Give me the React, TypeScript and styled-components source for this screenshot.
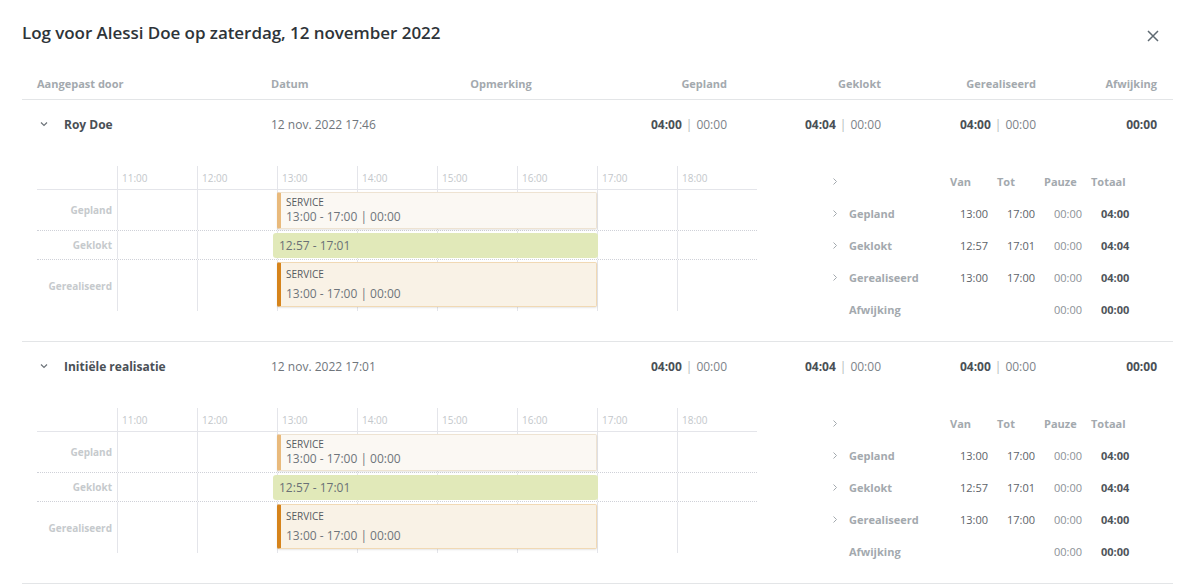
import React from "react";
import styled, { createGlobalStyle } from "styled-components";

const GlobalStyle = createGlobalStyle`
  html, body { margin: 0; padding: 0; background: #ffffff; }
  body { font-family: "Open Sans", "Noto Sans", Arial, sans-serif; color: #4a5056; }
  * { box-sizing: border-box; }
`;

const HOUR_W = 80;
const START_HOUR = 11;
const HOURS = [11, 12, 13, 14, 15, 16, 17, 18];

const toX = (t: string) => {
  const [h, m] = t.split(":").map(Number);
  return (h - START_HOUR + m / 60) * HOUR_W;
};

const Page = styled.div`
  padding: 21px 9px 0 22px;
  width: 1182px;
`;

const TitleBar = styled.div`
  display: flex;
  align-items: center;
  justify-content: space-between;
  height: 24px;
`;

const Title = styled.h1`
  margin: 0;
  font-size: 17px;
  line-height: 24px;
  font-weight: 600;
  letter-spacing: -0.05px;
  color: #2e3439;
`;

const CloseButton = styled.button`
  border: 0;
  background: none;
  padding: 0;
  margin: 6px 14px 0 0;
  width: 12px;
  height: 12px;
  display: flex;
  cursor: pointer;
`;

const Columns = styled.div`
  display: grid;
  grid-template-columns: 234px 149px 162px 145px 154px 155px 121px;
  align-items: center;
  padding: 0 16px 0 15px;
`;

const HeaderRow = styled(Columns)`
  margin-top: 22px;
  height: 33px;
  border-bottom: 1px solid #e3e5e7;
`;

const HeadCell = styled.div<{ $align?: "left" | "center" | "right" }>`
  font-size: 11px;
  font-weight: 700;
  color: #a3a9ae;
  text-align: ${(p) => p.$align || "left"};
`;

const Section = styled.div`
  border-bottom: 1px solid #e3e5e7;
`;

const SummaryRow = styled(Columns)`
  height: 48px;
`;

const NameCell = styled.div`
  display: flex;
  align-items: center;
  gap: 15px;
  padding-left: 2px;
  font-size: 12px;
  font-weight: 700;
  color: #4a5056;
`;

const DateCell = styled.div`
  font-size: 12px;
  color: #70767c;
`;

const ValueCell = styled.div`
  font-size: 12px;
  text-align: right;
  color: #7d8389;
  white-space: nowrap;
`;

const Strong = styled.span`
  font-weight: 700;
  color: #4a5056;
`;

const Pipe = styled.span`
  color: #b3b8bc;
  margin: 0 4px;
`;

const Body = styled.div`
  display: flex;
  align-items: flex-start;
  padding: 17px 0 16px 15px;
`;

const Timeline = styled.div`
  width: 720px;
  margin-top: 1px;
  display: flex;
  flex-direction: column;
`;

const TLRow = styled.div<{ $h: number; $line: "solid" | "dotted" | "none" }>`
  display: flex;
  height: ${(p) => p.$h}px;
  border-bottom: ${(p) =>
    p.$line === "solid"
      ? "1px solid #e4e5ea"
      : p.$line === "dotted"
      ? "1px dotted #cfd1d8"
      : "none"};
`;

const TLLabel = styled.div`
  width: 80px;
  flex: none;
  display: flex;
  align-items: center;
  justify-content: flex-end;
  padding-right: 5px;
  font-size: 10px;
  font-weight: 700;
  color: #c6cacd;
`;

const Track = styled.div`
  position: relative;
  width: 640px;
  flex: none;
  background: repeating-linear-gradient(
    to right,
    #e4e5ea 0,
    #e4e5ea 1px,
    transparent 1px,
    transparent ${HOUR_W}px
  );
`;

const HourTrack = styled.div`
  display: flex;
  width: 640px;
`;

const HourCell = styled.div`
  width: ${HOUR_W}px;
  border-left: 1px solid #e4e5ea;
  padding-left: 4px;
  display: flex;
  align-items: center;
  font-size: 10px;
  color: #c3c7cb;
`;

const Shift = styled.div<{ $variant: "planned" | "realised" }>`
  position: absolute;
  top: 2px;
  display: flex;
  flex-direction: column;
  gap: ${(p) => (p.$variant === "realised" ? "5px" : "0")};
  padding: ${(p) => (p.$variant === "realised" ? "5px" : "3px")} 0 0 5px;
  background: ${(p) => (p.$variant === "realised" ? "#f9f2e6" : "#fbf8f3")};
  border: 1px solid ${(p) => (p.$variant === "realised" ? "#f1d9b4" : "#eee3d2")};
  border-left: 4px solid ${(p) => (p.$variant === "realised" ? "#d6841c" : "#e9ba7c")};
  border-radius: 2px;
  box-shadow: 0 1px 2px rgba(0, 0, 0, 0.1);
`;

const ShiftType = styled.div`
  font-size: 10px;
  line-height: 12px;
  color: #555b61;
`;

const ShiftTime = styled.div`
  font-size: 12px;
  line-height: 17px;
  color: #6f757b;
  white-space: nowrap;
`;

const Clocked = styled.div`
  position: absolute;
  top: 2px;
  height: 25px;
  display: flex;
  align-items: center;
  padding-left: 6px;
  background: #e1e9b9;
  border-radius: 3px;
  font-size: 12px;
  color: #6a7076;
  white-space: nowrap;
`;

const Detail = styled.div`
  margin-left: 73px;
  display: grid;
  grid-template-columns: 19px 101px repeat(4, 47px);
  grid-auto-rows: 32px;
  align-items: center;
`;

const DHead = styled.div`
  font-size: 11px;
  font-weight: 700;
  color: #a3a9ae;
`;

const DLabel = styled.div`
  font-size: 11px;
  font-weight: 700;
  color: #a3a9ae;
`;

const DValue = styled.div<{ $tone: "dark" | "light" | "bold" }>`
  font-size: 11px;
  padding-left: 10px;
  font-weight: ${(p) => (p.$tone === "bold" ? 700 : 400)};
  color: ${(p) => (p.$tone === "light" ? "#8b9197" : p.$tone === "bold" ? "#4f555b" : "#5d6369")};
`;

const ChevronCell = styled.div`
  display: flex;
  align-items: center;
  padding-left: 2px;
`;

const Down = () => (
  <svg width="10" height="6" viewBox="0 0 10 6" fill="none">
    <path d="M2 1.5 L5 4.5 L8 1.5" stroke="#6d7379" strokeWidth="1.2" />
  </svg>
);

const Right = () => (
  <svg width="6" height="9" viewBox="0 0 6 9" fill="none">
    <path d="M1.5 1.5 L4.5 4.5 L1.5 7.5" stroke="#a3a9ae" strokeWidth="1" />
  </svg>
);

const CloseIcon = () => (
  <svg width="12" height="12" viewBox="0 0 12 12" fill="none">
    <path d="M1 1 L11 11 M11 1 L1 11" stroke="#5f6a72" strokeWidth="1.5" />
  </svg>
);

type Entry = {
  name: string;
  date: string;
  planned: string;
  clocked: string;
  realised: string;
  diff: string;
};

const entries: Entry[] = [
  { name: "Roy Doe", date: "12 nov. 2022 17:46", planned: "04:00", clocked: "04:04", realised: "04:00", diff: "00:00" },
  { name: "Initiële realisatie", date: "12 nov. 2022 17:01", planned: "04:00", clocked: "04:04", realised: "04:00", diff: "00:00" },
];

const detailRows = [
  { label: "Gepland", from: "13:00", to: "17:00", pause: "00:00", total: "04:00", chevron: true },
  { label: "Geklokt", from: "12:57", to: "17:01", pause: "00:00", total: "04:04", chevron: true },
  { label: "Gerealiseerd", from: "13:00", to: "17:00", pause: "00:00", total: "04:00", chevron: true },
  { label: "Afwijking", from: "", to: "", pause: "00:00", total: "00:00", chevron: false },
];

const span = (from: string, to: string) => ({
  left: Math.round(toX(from)),
  width: Math.round(toX(to) - toX(from)),
});

const LogSection: React.FC<{ e: Entry }> = ({ e }) => (
  <Section>
    <SummaryRow>
      <NameCell>
        <Down />
        {e.name}
      </NameCell>
      <DateCell>{e.date}</DateCell>
      <div />
      <ValueCell>
        <Strong>{e.planned}</Strong>
        <Pipe>|</Pipe>00:00
      </ValueCell>
      <ValueCell>
        <Strong>{e.clocked}</Strong>
        <Pipe>|</Pipe>00:00
      </ValueCell>
      <ValueCell>
        <Strong>{e.realised}</Strong>
        <Pipe>|</Pipe>00:00
      </ValueCell>
      <ValueCell>
        <Strong>{e.diff}</Strong>
      </ValueCell>
    </SummaryRow>
    <Body>
      <Timeline>
        <TLRow $h={24} $line="solid">
          <TLLabel />
          <HourTrack>
            {HOURS.map((h) => (
              <HourCell key={h}>{h}:00</HourCell>
            ))}
          </HourTrack>
        </TLRow>
        <TLRow $h={41} $line="dotted">
          <TLLabel>Gepland</TLLabel>
          <Track>
            <Shift $variant="planned" style={{ ...span("13:00", "17:00"), height: 37 }}>
              <ShiftType>SERVICE</ShiftType>
              <ShiftTime>13:00 - 17:00 | 00:00</ShiftTime>
            </Shift>
          </Track>
        </TLRow>
        <TLRow $h={29} $line="dotted">
          <TLLabel>Geklokt</TLLabel>
          <Track>
            <Clocked style={span("12:57", "17:01")}>12:57 - 17:01</Clocked>
          </Track>
        </TLRow>
        <TLRow $h={51} $line="none">
          <TLLabel>Gerealiseerd</TLLabel>
          <Track>
            <Shift $variant="realised" style={{ ...span("13:00", "17:00"), height: 45 }}>
              <ShiftType>SERVICE</ShiftType>
              <ShiftTime>13:00 - 17:00 | 00:00</ShiftTime>
            </Shift>
          </Track>
        </TLRow>
      </Timeline>
      <Detail>
        <ChevronCell>
          <Right />
        </ChevronCell>
        <div />
        <DHead>Van</DHead>
        <DHead>Tot</DHead>
        <DHead>Pauze</DHead>
        <DHead>Totaal</DHead>
        {detailRows.map((r) => (
          <React.Fragment key={r.label}>
            <ChevronCell>{r.chevron && <Right />}</ChevronCell>
            <DLabel>{r.label}</DLabel>
            <DValue $tone="dark">{r.from}</DValue>
            <DValue $tone="dark">{r.to}</DValue>
            <DValue $tone="light">{r.pause}</DValue>
            <DValue $tone="bold">{r.total}</DValue>
          </React.Fragment>
        ))}
      </Detail>
    </Body>
  </Section>
);

export default function App() {
  return (
    <>
      <GlobalStyle />
      <Page>
        <TitleBar>
          <Title>Log voor Alessi Doe op zaterdag, 12 november 2022</Title>
          <CloseButton aria-label="Sluiten">
            <CloseIcon />
          </CloseButton>
        </TitleBar>
        <HeaderRow>
          <HeadCell>Aangepast door</HeadCell>
          <HeadCell>Datum</HeadCell>
          <HeadCell $align="center">Opmerking</HeadCell>
          <HeadCell $align="right">Gepland</HeadCell>
          <HeadCell $align="right">Geklokt</HeadCell>
          <HeadCell $align="right">Gerealiseerd</HeadCell>
          <HeadCell $align="right">Afwijking</HeadCell>
        </HeaderRow>
        {entries.map((e) => (
          <LogSection key={e.name} e={e} />
        ))}
      </Page>
    </>
  );
}
